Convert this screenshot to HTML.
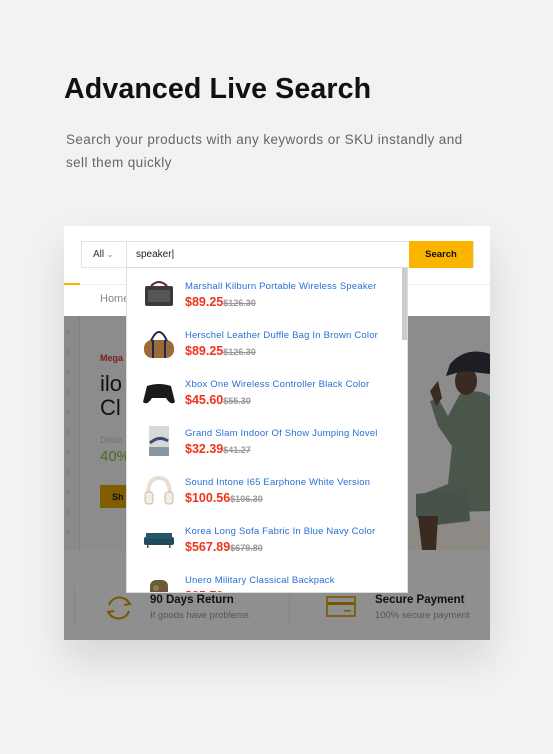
<!DOCTYPE html>
<html><head><style>
*{margin:0;padding:0;box-sizing:border-box}
body{width:553px;height:754px;background:#f2f2f2;font-family:"Liberation Sans",sans-serif;position:relative;overflow:hidden}
.abs{position:absolute}
h1{position:absolute;left:64px;top:73px;font-size:28.6px;font-weight:bold;color:#111;letter-spacing:0.1px}
.sub{position:absolute;left:66px;top:128px;width:418px;font-size:13.5px;line-height:23px;color:#666;letter-spacing:0.4px}
.card{position:absolute;left:64px;top:226px;width:426px;height:414px;background:#fff;box-shadow:0 20px 40px rgba(0,0,0,.12);overflow:hidden}
.item{position:absolute;left:0;width:282px;height:49px}
.item .t{position:absolute;left:58px;top:7px;font-size:9.5px;color:#2a6fd6;white-space:nowrap;letter-spacing:.2px}
.item .p{position:absolute;left:58px;top:21px;font-size:12.5px;font-weight:bold;color:#f0331e}
.item .p s{font-size:9px;color:#999;font-weight:bold}
.img{position:absolute;left:14px;top:2px;width:36px;height:36px}
</style></head><body>
<h1>Advanced Live Search</h1>
<div class="sub">Search your products with any keywords or SKU instandly and sell them quickly</div>
<div class="card">
 <div class="abs" style="left:0;top:58px;width:426px;height:1px;background:#eee"></div>
 <div class="abs" style="left:0;top:57px;width:16px;height:2px;background:#fbb500"></div>
 <div class="abs" style="left:36px;top:67px;font-size:11px;color:#888">Home</div>
 <div class="abs" style="left:0;top:90px;width:426px;height:234px;background:#8c8c8c"></div>
 <div class="abs" style="left:0;top:90px;width:16px;height:234px;background:#8a8a8a;border-right:1px solid #7f7f7f"></div>
 <div class="abs" style="left:2px;top:95px;font-size:9px;color:#6a6a6a;line-height:20px">›<br>›<br>›<br>›<br>›<br>›<br>›<br>›<br>›<br>›<br>›</div>
 <div class="abs" style="left:36px;top:127px;font-size:9px;font-weight:bold;color:#7a1c1c">Mega</div>
 <div class="abs" style="left:36px;top:146px;font-size:22px;color:#111;line-height:24px">ilo<br>Cl</div>
 <div class="abs" style="left:36px;top:209px;font-size:9px;color:#6d6d6d">Disco</div>
 <div class="abs" style="left:36px;top:222px;font-size:15px;color:#4b6a1a">40%</div>
 <div class="abs" style="left:36px;top:259px;width:30px;height:23px;background:#7f5d00"></div>
 <div class="abs" style="left:48px;top:266px;font-size:9px;font-weight:bold;color:#111">Sh</div>
 <svg class="abs" style="left:344px;top:90px" width="82" height="234" viewBox="0 0 82 234">
  <rect x="0" y="205" width="82" height="29" fill="#8d8a86"/>
  <path d="M52 78 Q70 72 82 80 L82 195 L50 196 L20 200 L10 180 L40 168 L44 130 L30 110 L22 85 L30 82 L40 100 Z" fill="#495649"/>
  <path d="M8 178 L60 172 L62 205 L20 210 L8 200Z" fill="#47534a"/>
  <path d="M10 200 L30 200 L28 234 L14 234Z" fill="#3b2a22"/>
  <ellipse cx="58" cy="65" rx="11" ry="14" fill="#3a2a22"/>
  <path d="M42 48 Q58 30 82 38 L82 58 L55 55 L38 60 Z" fill="#1c1e24"/>
  <path d="M22 75 L30 65 L34 82 L28 90Z" fill="#3a2a22"/>
 </svg>
 <div class="abs" style="left:0;top:324px;width:426px;height:90px;background:#8f8f8f"></div>
 <div class="abs" style="left:10px;top:360px;width:1px;height:40px;background:#858585"></div>
 <div class="abs" style="left:225px;top:360px;width:1px;height:40px;background:#858585"></div>
 <svg class="abs" style="left:40px;top:367px" width="30" height="30" viewBox="0 0 30 30"><path d="M5 12 A11 11 0 0 1 25 10 M25 18 A11 11 0 0 1 5 20" fill="none" stroke="#7a5800" stroke-width="2"/><path d="M22 6 L26 11 L20 12" fill="none" stroke="#7a5800" stroke-width="2"/><path d="M8 24 L4 19 L10 18" fill="none" stroke="#7a5800" stroke-width="2"/></svg>
 <div class="abs" style="left:86px;top:368px;font-size:11.5px;font-weight:bold;color:#111">90 Days Return</div>
 <div class="abs" style="left:86px;top:384px;font-size:9.5px;color:#555">If goods have problems</div>
 <svg class="abs" style="left:262px;top:370px" width="30" height="22" viewBox="0 0 30 22"><rect x="1" y="1" width="28" height="19" fill="none" stroke="#7a5800" stroke-width="1.6"/><rect x="1" y="6" width="28" height="3" fill="#7a5800"/><rect x="18" y="14" width="7" height="1.5" fill="#7a5800"/></svg>
 <div class="abs" style="left:311px;top:368px;font-size:11.5px;font-weight:bold;color:#111">Secure Payment</div>
 <div class="abs" style="left:311px;top:384px;font-size:9.5px;color:#555">100% secure payment</div>
 <div class="abs" style="left:17px;top:15px;width:393px;height:27px;border:1px solid #e3e3e3"></div>
 <div class="abs" style="left:62px;top:15px;width:1px;height:27px;background:#e3e3e3"></div>
 <div class="abs" style="left:29px;top:23px;font-size:10px;color:#333">All <span style="font-size:8px;color:#888">&#8964;</span></div>
 <div class="abs" style="left:72px;top:23px;font-size:10px;color:#222">speaker|</div>
 <div class="abs" style="left:345px;top:15px;width:64px;height:27px;background:#fbb500;font-size:9.5px;font-weight:bold;color:#111;text-align:center;line-height:27px">Search</div>
 <div class="abs" style="left:62px;top:41px;width:282px;height:326px;background:#fff;border:1px solid #ddd;overflow:hidden">
  <div class="abs" style="left:275px;top:0;width:5px;height:72px;background:#ccc"></div>
  <div class="item" style="top:6px"><svg class="img" viewBox="0 0 36 36"><rect x="4" y="10" width="28" height="20" rx="2" fill="#3a3a3a"/><path d="M10 10 Q18 2 26 10" stroke="#6b2020" stroke-width="2" fill="none"/><rect x="7" y="14" width="22" height="12" fill="#555"/></svg><div class="t">Marshall Kilburn Portable Wireless Speaker</div><div class="p">$89.25<s>$126.30</s></div></div>
  <div class="item" style="top:55px"><svg class="img" viewBox="0 0 36 36"><rect x="3" y="15" width="30" height="18" rx="8" fill="#9b6a38"/><path d="M10 16 Q18 -2 26 16" stroke="#1d2a4a" stroke-width="2" fill="none"/><rect x="11" y="15" width="2" height="18" fill="#1d2a4a"/><rect x="23" y="15" width="2" height="18" fill="#1d2a4a"/></svg><div class="t">Herschel Leather Duffle Bag In Brown Color</div><div class="p">$89.25<s>$126.30</s></div></div>
  <div class="item" style="top:104px"><svg class="img" viewBox="0 0 36 36"><path d="M6 12 Q18 8 30 12 L34 28 Q30 32 25 24 L11 24 Q6 32 2 28Z" fill="#1a1a1a"/></svg><div class="t">Xbox One Wireless Controller Black Color</div><div class="p">$45.60<s>$55.30</s></div></div>
  <div class="item" style="top:153px"><svg class="img" viewBox="0 0 36 36"><rect x="8" y="3" width="20" height="30" fill="#d8d8d4"/><path d="M9 20 Q18 12 27 18" stroke="#3c4e78" stroke-width="3" fill="none"/><rect x="8" y="24" width="20" height="9" fill="#8a96a0"/></svg><div class="t">Grand Slam Indoor Of Show Jumping Novel</div><div class="p">$32.39<s>$41.27</s></div></div>
  <div class="item" style="top:202px"><svg class="img" viewBox="0 0 36 36"><path d="M7 26 Q6 6 18 6 Q30 6 29 26" stroke="#e8ddd0" stroke-width="4" fill="none"/><rect x="4" y="20" width="8" height="12" rx="3" fill="#eee" stroke="#d9b88a"/><rect x="24" y="20" width="8" height="12" rx="3" fill="#eee" stroke="#d9b88a"/></svg><div class="t">Sound Intone I65 Earphone White Version</div><div class="p">$100.56<s>$106.30</s></div></div>
  <div class="item" style="top:251px"><svg class="img" viewBox="0 0 36 36"><rect x="3" y="16" width="30" height="8" rx="2" fill="#1f4a5c"/><rect x="5" y="12" width="26" height="6" fill="#245668"/><rect x="6" y="24" width="1.5" height="3" fill="#6b4a2a"/><rect x="28" y="24" width="1.5" height="3" fill="#6b4a2a"/></svg><div class="t">Korea Long Sofa Fabric In Blue Navy Color</div><div class="p">$567.89<s>$679.80</s></div></div>
  <div class="item" style="top:300px"><svg class="img" viewBox="0 0 36 36"><rect x="9" y="10" width="18" height="26" rx="6" fill="#6b5a3a"/><circle cx="15" cy="18" r="3" fill="#8a7a50"/><circle cx="21" cy="26" r="3" fill="#3f3a28"/></svg><div class="t">Unero Military Classical Backpack</div><div class="p">$35.70<s>$40.30</s></div></div>
 </div>
</div>
</body></html>
